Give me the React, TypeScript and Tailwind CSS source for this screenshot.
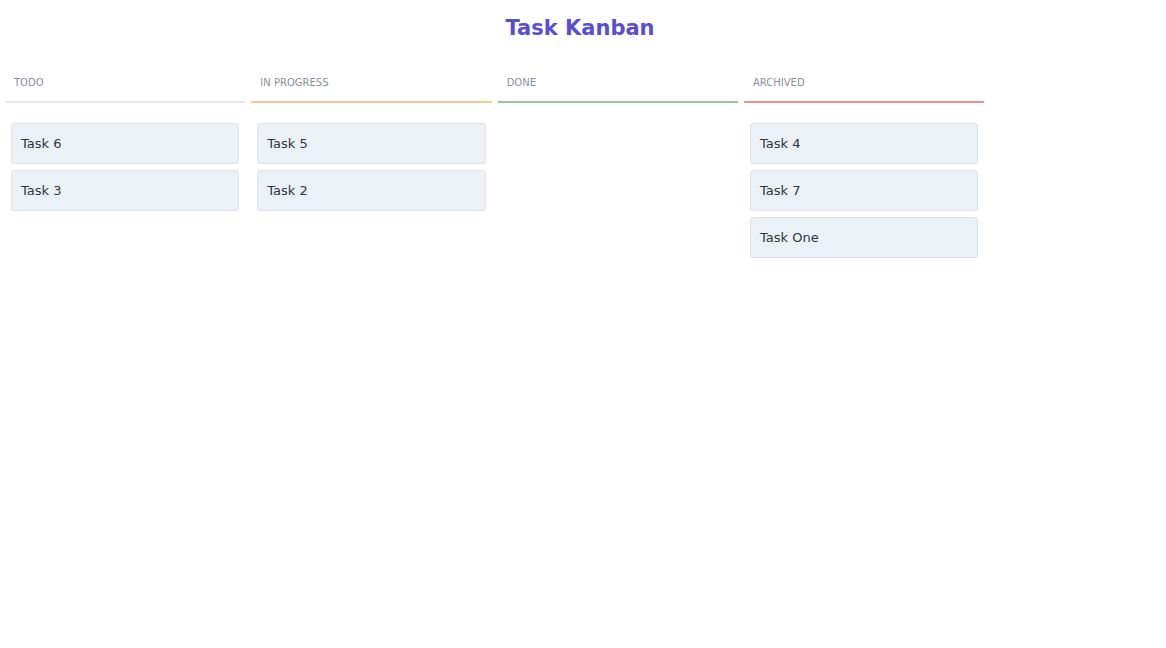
const columns = [
  { title: 'Todo', line: 'border-[#e9e9e9]', tasks: ['Task 6', 'Task 3'] },
  { title: 'In Progress', line: 'border-[#fbc98f]', tasks: ['Task 5', 'Task 2'] },
  { title: 'Done', line: 'border-[#95c996]', tasks: [] as string[] },
  { title: 'Archived', line: 'border-[#f48f8f]', tasks: ['Task 4', 'Task 7', 'Task One'] },
];

export default function App() {
  return (
    <div className="min-h-screen bg-white font-['DejaVu_Sans',sans-serif]">
      <h1 className="pt-[12px] pr-[6px] text-center text-[21px] font-bold leading-[32px] text-[#5a4ecf]">Task Kanban</h1>

      <div className="mt-[20px] ml-[5px] grid w-[979.33px] grid-cols-4 gap-[6px]">
        {columns.map(col => (
          <div key={col.title}>
            <div className={`border-b-2 ${col.line} px-[9px] pt-[11px] pb-[10px]`}>
              <p className="text-[10px] uppercase leading-[16px] text-[#8b8f9c]">{col.title}</p>
            </div>
            <div className="flex flex-col gap-[6px] px-[6px] pt-[20px]">
              {col.tasks.map(t => (
                <div
                  key={t}
                  className="h-[41px] flex items-center rounded-[3px] border border-[#dce3ec] bg-[#ecf1f6] px-[9px] text-[13px] text-[#2f3542]"
                >
                  {t}
                </div>
              ))}
            </div>
          </div>
        ))}
      </div>
    </div>
  );
}
